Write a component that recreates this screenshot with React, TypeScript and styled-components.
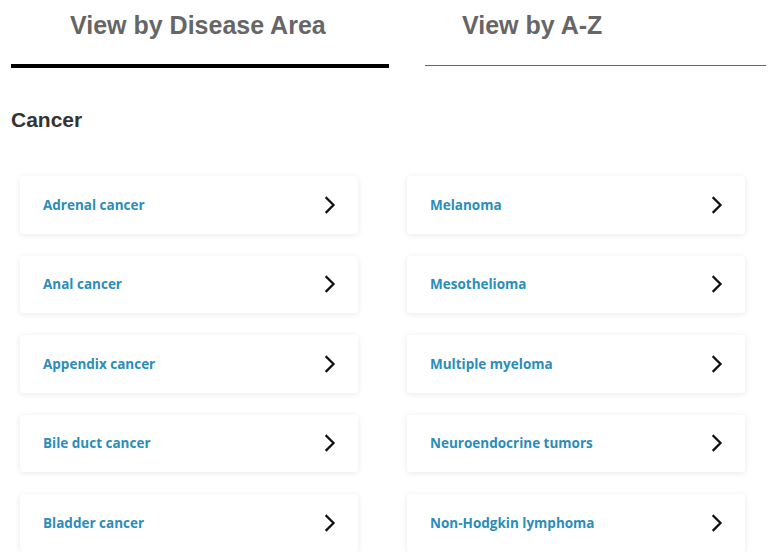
import React from "react";
import styled, { createGlobalStyle } from "styled-components";

const Global = createGlobalStyle`
  html, body { margin: 0; padding: 0; background: #ffffff; }
  body { font-family: "Liberation Sans", Arial, sans-serif; }
`;

const Page = styled.div`
  padding: 0 2px 0 11px;
  width: 768px;
  box-sizing: border-box;
`;

const Tabs = styled.div`
  display: flex;
  align-items: flex-start;
  gap: 36px;
`;

const Tab = styled.div<{ $active?: boolean; $width: number; $indent: number }>`
  width: ${(p) => p.$width}px;
  box-sizing: border-box;
  padding: 10px 0 ${(p) => (p.$active ? 24 : 25)}px ${(p) => p.$indent}px;
  font-family: "Liberation Sans", Arial, sans-serif;
  font-weight: 700;
  font-size: 25px;
  line-height: 30px;
  color: #666666;
  border-bottom: ${(p) => (p.$active ? "4px solid #000000" : "1px solid #666666")};
  white-space: nowrap;
`;

const Heading = styled.h2`
  margin: 38px 0 0;
  font-family: "Liberation Sans", Arial, sans-serif;
  font-weight: 700;
  font-size: 21px;
  line-height: 28px;
  color: #333333;
`;

const Grid = styled.div`
  display: grid;
  grid-template-columns: 338px 338px;
  column-gap: 49px;
  row-gap: 22px;
  padding: 42px 0 0 9px;
`;

const Card = styled.a`
  display: flex;
  align-items: center;
  justify-content: space-between;
  height: 57.5px;
  box-sizing: border-box;
  padding: 0 21px 0 23px;
  background: #ffffff;
  border-radius: 3px;
  box-shadow: 0 1px 6px rgba(0, 0, 0, 0.09);
  text-decoration: none;
  cursor: pointer;
`;

const Label = styled.span`
  font-family: "Open Sans", "Noto Sans", sans-serif;
  font-weight: 700;
  font-size: 13.5px;
  color: #2a8dba;
`;

const Chevron = () => (
  <svg width="14" height="18" viewBox="0 0 14 18" fill="none">
    <polyline points="3.5,2 10.5,9 3.5,16" stroke="#111111" strokeWidth="2.3" strokeLinecap="square" />
  </svg>
);

const left = ["Adrenal cancer", "Anal cancer", "Appendix cancer", "Bile duct cancer", "Bladder cancer"];
const right = ["Melanoma", "Mesothelioma", "Multiple myeloma", "Neuroendocrine tumors", "Non-Hodgkin lymphoma"];

const items: string[] = [];
left.forEach((l, i) => {
  items.push(l, right[i]);
});

export default function App() {
  return (
    <>
      <Global />
      <Page>
        <Tabs>
          <Tab $active $width={378} $indent={59}>View by Disease Area</Tab>
          <Tab $width={341} $indent={37}>View by A-Z</Tab>
        </Tabs>
        <Heading>Cancer</Heading>
        <Grid>
          {items.map((t) => (
            <Card key={t}>
              <Label>{t}</Label>
              <Chevron />
            </Card>
          ))}
        </Grid>
      </Page>
    </>
  );
}
